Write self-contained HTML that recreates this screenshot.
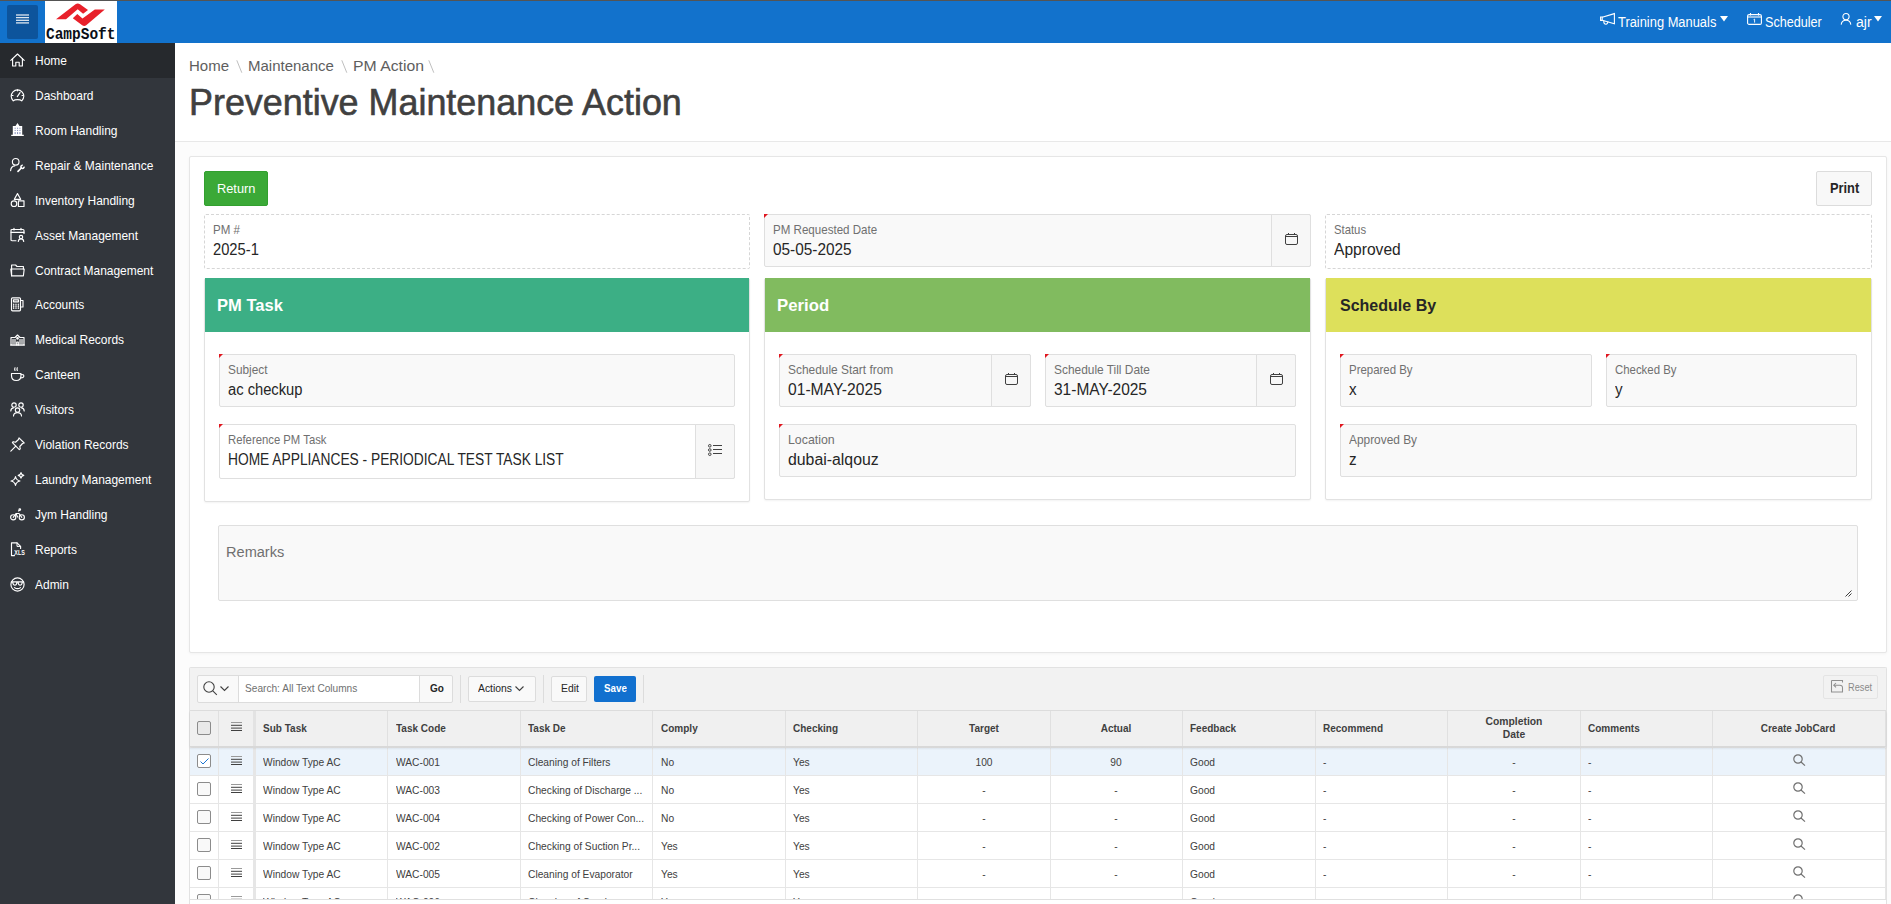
<!DOCTYPE html><html><head><meta charset="utf-8"><title>Preventive Maintenance Action</title><style>
*{box-sizing:border-box;}
html,body{margin:0;padding:0;}
body{width:1891px;height:904px;overflow:hidden;position:relative;background:#fcfcfc;font-family:"Liberation Sans",sans-serif;color:#262626;}
div,span{position:absolute;}
.t{white-space:nowrap;display:block;transform-origin:0 0;}
.tc{white-space:nowrap;display:block;transform-origin:50% 0;}
svg{position:absolute;overflow:visible;}
#topline{left:0;top:0;width:1891px;height:1px;background:#545454;}
#hdr{left:0;top:1px;width:1891px;height:42px;background:#1272cc;}
#burger{left:7px;top:5px;width:31px;height:34px;background:#0d549c;border-radius:2px;}
#logo{left:45px;top:1px;width:72px;height:42px;background:#fff;}
.ht{color:#fff;font-size:14px;line-height:16px;margin-top:0.3px;}
#side{left:0;top:43px;width:175px;height:861px;background:#32363c;}
.nav{left:0;width:175px;height:35px;}
.nav .t{left:35px;top:10px;color:#fff;font-size:13px;line-height:16px;}
.nav svg{left:10px;top:10px;}
#crumb{left:175px;top:43px;width:1716px;height:99px;background:#fff;border-bottom:1px solid #e8e8e8;}
.bc{font-size:15px;line-height:18px;color:#5e5e5e;top:13.7px;}
.bs{font-size:15px;line-height:18px;color:#b0b0b0;top:15.5px;}
#title{left:14px;top:38.5px;font-size:36px;line-height:42px;color:#404040;-webkit-text-stroke:0.6px #404040;}
#region{left:189px;top:156px;width:1698px;height:497px;background:#fff;border:1px solid #e6e6e6;box-shadow:0 1px 3px rgba(0,0,0,.04);border-radius:2px;}
.btn{border-radius:2px;font-size:13px;line-height:16px;}
.fld{border:1px solid #dfdfdf;background:#f9f9f9;border-radius:2px;}
.fld.ro{border:1px dashed #d6d6d6;background:#fff;}
.fld.wh{background:#fff;}
.lbl{left:8px;top:7px;font-size:13px;line-height:16px;color:#707070;}
.val{left:8px;top:25px;font-size:16px;line-height:19px;color:#262626;}
.req{left:-1px;top:-1px;width:0;height:0;border-top:4px solid #e0161f;border-right:4px solid transparent;}
.fbtn{top:-1px;bottom:-1px;right:-1px;border:1px solid #dfdfdf;background:#f7f7f7;border-radius:0 2px 2px 0;}
.panel{background:#fff;border:1px solid #e2e2e2;border-radius:2px;box-shadow:0 1px 2px rgba(0,0,0,.05);}
.phd{left:0;top:-1px;right:0;height:54px;}
.ptt{left:13.5px;top:18px;font-size:17px;line-height:20px;font-weight:bold;}
#ig{left:189px;top:667px;width:1697px;height:237px;background:#fff;border:1px solid #e2e2e2;}
#igtb{left:0;top:0;width:1695px;height:43px;background:#f0f0f0;border-bottom:1px solid #e2e2e2;}
.tb{background:#f9f9f9;border:1px solid #dcdcdc;border-radius:2px;}
.gh{top:43px;height:36px;background:#f0f0f0;}
.gc{font-size:11px;line-height:14px;}
</style></head><body>
<div id="topline"></div><div id="hdr"></div>
<div id="burger"><svg style="left:9px;top:9px" width="13" height="10" viewBox="0 0 13 10"><g stroke="#dfe7f0" stroke-width="1.3"><line x1="0" y1="1" x2="13" y2="1"/><line x1="0" y1="3.6" x2="13" y2="3.6"/><line x1="0" y1="6.3" x2="13" y2="6.3"/><line x1="0" y1="8.9" x2="13" y2="8.9"/></g></svg></div>
<div id="logo"><svg style="left:0;top:0" width="72" height="42" viewBox="0 0 72 42"><path d="M11 18.2 L30.5 3.3 Q32.7 1.5 35 3.3 L43 8.9 L38.1 12.7 L32.7 8.2 L21 18.2 Z" fill="#e8202a"/><path d="M27.8 17.2 L32.3 13 L37.5 17.5 L49.8 8.6 L59.8 8.6 L41.2 24.2 Q39.2 25.8 37.2 24.2 Z" fill="#e8202a"/><text x="1" y="38.2" textLength="69.5" lengthAdjust="spacingAndGlyphs" font-family="Liberation Mono" font-weight="bold" font-size="16.5" fill="#0a0f18">CampSoft</text></svg></div>
<svg style="left:1600px;top:13px" width="15" height="12" viewBox="0 0 15 12"><g fill="none" stroke="#fff" stroke-width="1.1"><path d="M0.6 4 V7.4 H2.2 V4 Z"/><path d="M2.2 4.2 L14.4 0.6 V10.8 L2.2 7.3"/><path d="M3.8 7.7 Q3.6 11.3 6 11.3 Q7.8 11.2 7.9 8.6"/></g></svg>
<span class="ht t" style="left:1618px;top:14px;transform:scaleX(.92)">Training Manuals</span>
<svg style="left:1720px;top:16px" width="8" height="6" viewBox="0 0 8 6"><path d="M0 0 L8 0 L4 5.5 Z" fill="#fff"/></svg>
<svg style="left:1747px;top:12.5px" width="15" height="12" viewBox="0 0 15 12"><g fill="none" stroke="#fff" stroke-width="1.1"><rect x="0.6" y="1.6" width="13.8" height="9.8" rx="1.5"/><line x1="0.6" y1="4" x2="14.4" y2="4"/><line x1="3.5" y1="0" x2="3.5" y2="2.5"/><line x1="11.5" y1="0" x2="11.5" y2="2.5"/><path d="M6.6 6.6 L7.6 6.1 V9.6" stroke-width="0.9"/></g></svg>
<span class="ht t" style="left:1765px;top:14px;transform:scaleX(.90)">Scheduler</span>
<svg style="left:1840px;top:13px" width="12" height="12" viewBox="0 0 12 12"><g fill="none" stroke="#fff" stroke-width="1.1"><circle cx="6" cy="3.6" r="3.1"/><path d="M1.2 11.6 Q1.6 7.2 6 7.2 Q10.4 7.2 10.8 11.6"/></g></svg>
<span class="ht t" style="left:1856px;top:14px">ajr</span>
<svg style="left:1874px;top:16px" width="8" height="6" viewBox="0 0 8 6"><path d="M0 0 L8 0 L4 5.5 Z" fill="#fff"/></svg>
<div id="side"></div>
<div style="left:0;top:43px;width:175px;height:35px;background:#26292d"></div>
<div class="nav" style="top:43.00px"><svg width="15" height="15" viewBox="0 0 15 15"><g fill="none" stroke="#fff" stroke-width="1.15" stroke-linejoin="round" stroke-linecap="round"><path d="M0.8 7.3 L7.5 1 L14.2 7.3"/><path d="M2.6 5.6 V13 H5.8 V9.2 H9.2 V13 H12.4 V5.6"/></g></svg><span class="t" style="transform:scaleX(.92)">Home</span></div>
<div class="nav" style="top:77.92px"><svg width="15" height="15" viewBox="0 0 15 15"><g fill="none" stroke="#fff" stroke-width="1.15" stroke-linejoin="round" stroke-linecap="round"><path d="M3.2 12.8 A6.3 6.3 0 1 1 11.8 12.8 Q10.5 11.6 7.5 11.6 Q4.5 11.6 3.2 12.8 Z"/><path d="M7.3 8.6 L10 4.6"/><line x1="7.5" y1="1.8" x2="7.5" y2="2.8"/><line x1="2" y1="7.5" x2="3" y2="7.5"/><line x1="12" y1="7.5" x2="13" y2="7.5"/></g></svg><span class="t" style="transform:scaleX(.92)">Dashboard</span></div>
<div class="nav" style="top:112.84px"><svg width="15" height="15" viewBox="0 0 15 15"><g transform="translate(0,-1.3)"><path d="M2.8 4.2 L5.5 4.2 L7.5 1.2 L9.5 4.2 L12.2 4.2 L12.2 13 L13.8 13 L13.8 14.2 L1.2 14.2 L1.2 13 L2.8 13 Z" fill="#fff"/><g fill="#8c96c0"><rect x="4.6" y="6" width="1.1" height="1.1"/><rect x="7" y="6" width="1.1" height="1.1"/><rect x="9.4" y="6" width="1.1" height="1.1"/><rect x="4.6" y="8.2" width="1.1" height="1.1"/><rect x="7" y="8.2" width="1.1" height="1.1"/><rect x="9.4" y="8.2" width="1.1" height="1.1"/><rect x="4.6" y="10.4" width="1.1" height="2"/><rect x="7" y="10.4" width="1.1" height="2"/><rect x="9.4" y="10.4" width="1.1" height="2"/></g></g></svg><span class="t" style="transform:scaleX(.92)">Room Handling</span></div>
<div class="nav" style="top:147.76px"><svg width="15" height="15" viewBox="0 0 15 15"><g fill="none" stroke="#fff" stroke-width="1.15" stroke-linejoin="round" stroke-linecap="round"><circle cx="5.7" cy="3.8" r="3.3"/><path d="M0.6 12.6 Q1 8.2 4.8 7.9"/><path d="M8 13.3 L11.3 10" stroke-width="1.7"/><path d="M14.08 8.52 A1.6 1.6 0 1 1 12.78 7.22" stroke-width="1.5" stroke-linecap="butt"/></g></svg><span class="t" style="transform:scaleX(.92)">Repair &amp; Maintenance</span></div>
<div class="nav" style="top:182.68px"><svg width="15" height="15" viewBox="0 0 15 15"><g fill="none" stroke="#fff" stroke-width="1.15" stroke-linejoin="round" stroke-linecap="round"><path d="M7.5 0.6 L10.7 6.3 H4.3 Z"/><circle cx="4" cy="10.7" r="2.8"/><rect x="8.4" y="7.8" width="5.6" height="5.7"/></g></svg><span class="t" style="transform:scaleX(.92)">Inventory Handling</span></div>
<div class="nav" style="top:217.60px"><svg width="15" height="15" viewBox="0 0 15 15"><g fill="none" stroke="#fff" stroke-width="1.15" stroke-linejoin="round" stroke-linecap="round"><path d="M6 12.7 H2 Q1 12.7 1 11.7 V2.5 Q1 1.5 2 1.5 H13 Q14 1.5 14 2.5 V5.5"/><line x1="1" y1="4.3" x2="14" y2="4.3"/><line x1="4" y1="0.4" x2="4" y2="2"/><line x1="11" y1="0.4" x2="11" y2="2"/><circle cx="11" cy="9" r="1.7"/><path d="M8.3 13.5 Q8.5 10.9 11 10.9 Q13.5 10.9 13.7 13.5"/></g></svg><span class="t" style="transform:scaleX(.92)">Asset Management</span></div>
<div class="nav" style="top:252.52px"><svg width="15" height="15" viewBox="0 0 15 15"><g fill="none" stroke="#fff" stroke-width="1.15" stroke-linejoin="round" stroke-linecap="round"><path d="M1.6 12.8 V2 H5.6 L7 3.5 H13.4 V6"/><path d="M0.8 6 H14.2 L13.4 12.8 H1.6 Z"/></g></svg><span class="t" style="transform:scaleX(.92)">Contract Management</span></div>
<div class="nav" style="top:287.44px"><svg width="15" height="15" viewBox="0 0 15 15"><g fill="none" stroke="#fff" stroke-width="1.15" stroke-linejoin="round" stroke-linecap="round"><rect x="1.5" y="0.8" width="9" height="13" rx="1"/><rect x="3.5" y="2.8" width="5" height="2"/><path d="M10.5 3.5 H13 V10 H10.5"/><line x1="3.7" y1="7" x2="3.7" y2="11.5" stroke-dasharray="1 1"/><line x1="6" y1="7" x2="6" y2="11.5" stroke-dasharray="1 1"/><line x1="8.3" y1="7" x2="8.3" y2="11.5" stroke-dasharray="1 1"/></g></svg><span class="t" style="transform:scaleX(.92)">Accounts</span></div>
<div class="nav" style="top:322.36px"><svg width="15" height="15" viewBox="0 0 15 15"><g fill="none" stroke="#fff" stroke-width="1.15" stroke-linejoin="round" stroke-linecap="round"><path d="M1 13 V5.5 H5 L7.5 3 L10 5.5 H14 V13 Z"/><line x1="0.5" y1="13" x2="14.5" y2="13"/><line x1="3" y1="7.5" x2="3" y2="11.5"/><line x1="5" y1="7.5" x2="5" y2="11.5"/><line x1="10" y1="7.5" x2="10" y2="11.5"/><line x1="12" y1="7.5" x2="12" y2="11.5"/><path d="M6.7 13 V10 H8.3 V13"/><circle cx="7.5" cy="6.3" r="0.8" fill="#fff"/></g></svg><span class="t" style="transform:scaleX(.92)">Medical Records</span></div>
<div class="nav" style="top:357.28px"><svg width="15" height="15" viewBox="0 0 15 15"><g fill="none" stroke="#fff" stroke-width="1.15" stroke-linejoin="round" stroke-linecap="round"><path d="M1.5 6.5 H11 V8.5 Q11 13.5 6.3 13.5 Q1.5 13.5 1.5 8.5 Z"/><path d="M11 7.5 Q14 7.3 13.8 9.3 Q13.5 11 10.5 10.8"/><path d="M5 0.8 Q4.3 2.2 5 3.5 M7.3 0.8 Q6.6 2.2 7.3 3.5"/></g></svg><span class="t" style="transform:scaleX(.92)">Canteen</span></div>
<div class="nav" style="top:392.20px"><svg width="15" height="15" viewBox="0 0 15 15"><g fill="none" stroke="#fff" stroke-width="1.15" stroke-linejoin="round" stroke-linecap="round"><circle cx="4" cy="3" r="2.2"/><circle cx="11" cy="3" r="2.2"/><circle cx="7.5" cy="8" r="2.2"/><path d="M0.8 9 Q1 5.8 3.5 5.8"/><path d="M14.2 9 Q14 5.8 11.5 5.8"/><path d="M3.5 14 Q3.7 10.6 7.5 10.6 Q11.3 10.6 11.5 14"/></g></svg><span class="t" style="transform:scaleX(.92)">Visitors</span></div>
<div class="nav" style="top:427.12px"><svg width="15" height="15" viewBox="0 0 15 15"><g fill="none" stroke="#fff" stroke-width="1.15" stroke-linejoin="round" stroke-linecap="round"><path d="M9 0.8 L14.2 6 L12.5 6.5 L9.8 9.5 L10.3 11.8 L9.3 12.6 L2.4 5.7 L3.2 4.7 L5.5 5.2 L8.5 2.5 Z"/><line x1="5.8" y1="9.2" x2="0.8" y2="14.2"/></g></svg><span class="t" style="transform:scaleX(.92)">Violation Records</span></div>
<div class="nav" style="top:462.04px"><svg width="15" height="15" viewBox="0 0 15 15"><g fill="none" stroke="#fff" stroke-width="1.15" stroke-linejoin="round" stroke-linecap="round"><path d="M5.5 4.5 Q6.2 8.3 10 9 Q6.2 9.7 5.5 13.5 Q4.8 9.7 1 9 Q4.8 8.3 5.5 4.5 Z"/><path d="M11 0.6 Q11.4 3 13.8 3.4 Q11.4 3.8 11 6.2 Q10.6 3.8 8.2 3.4 Q10.6 3 11 0.6 Z"/></g></svg><span class="t" style="transform:scaleX(.92)">Laundry Management</span></div>
<div class="nav" style="top:496.96px"><svg width="15" height="15" viewBox="0 0 15 15"><g fill="none" stroke="#fff" stroke-width="1.15" stroke-linejoin="round" stroke-linecap="round"><circle cx="3.2" cy="10.3" r="2.6"/><circle cx="11.8" cy="10.3" r="2.6"/><path d="M3.2 10.3 L6 6.5 L9 6.5 L11.8 10.3 M6 6.5 L7.5 10 M8.5 4 L9.5 3.2"/><circle cx="9.8" cy="2.5" r="0.8"/></g></svg><span class="t" style="transform:scaleX(.92)">Jym Handling</span></div>
<div class="nav" style="top:531.88px"><svg width="15" height="15" viewBox="0 0 15 15"><g fill="none" stroke="#fff" stroke-width="1.15" stroke-linejoin="round" stroke-linecap="round"><path d="M4.5 13.6 H1.5 V0.8 H7 L10.6 4.4 V6.5"/><path d="M7 0.8 V4.4 H10.6" stroke-width="1"/></g><text x="4.3" y="12.6" font-family="Liberation Sans" font-weight="bold" font-size="6.6" fill="#fff" textLength="10.5" lengthAdjust="spacingAndGlyphs">XLS</text></svg><span class="t" style="transform:scaleX(.92)">Reports</span></div>
<div class="nav" style="top:566.80px"><svg width="15" height="15" viewBox="0 0 15 15"><g fill="none" stroke="#fff" stroke-width="1.15" stroke-linejoin="round" stroke-linecap="round"><circle cx="7.5" cy="7.5" r="6.6"/><path d="M4.5 10.6 Q7.5 12.8 10.5 10.6"/><path d="M1.4 4.8 H13.6 M2.6 4.8 Q3 8.2 4.9 8.2 Q6.8 8.2 7 4.8 M8 4.8 Q8.2 8.2 10.1 8.2 Q12 8.2 12.4 4.8"/></g></svg><span class="t" style="transform:scaleX(.92)">Admin</span></div>
<div id="crumb">
<span class="bc t" style="left:14px">Home</span>
<span class="bc t" style="left:73px">Maintenance</span>
<span class="bc t" style="left:178px;transform:scaleX(1.05)">PM Action</span>
<svg style="left:60.5px;top:17px" width="7" height="13" viewBox="0 0 7 13"><line x1="0.8" y1="0.3" x2="5.8" y2="12.7" stroke="#b8b8b8" stroke-width="0.9"/></svg>
<svg style="left:165.5px;top:17px" width="7" height="13" viewBox="0 0 7 13"><line x1="0.8" y1="0.3" x2="5.8" y2="12.7" stroke="#b8b8b8" stroke-width="0.9"/></svg>
<svg style="left:253px;top:17px" width="7" height="13" viewBox="0 0 7 13"><line x1="0.8" y1="0.3" x2="5.8" y2="12.7" stroke="#b8b8b8" stroke-width="0.9"/></svg>
<span id="title" class="t" style="transform:scaleX(.997)">Preventive Maintenance Action</span>
</div>
<div id="region"></div>
<div class="btn" style="left:204px;top:171px;width:64px;height:35px;background:#3ba937;border:1px solid #32a02f"><span class="t" style="left:12px;top:8.7px;color:#fff;transform:scaleX(.985)">Return</span></div>
<div class="btn" style="left:1816px;top:171px;width:56px;height:35px;background:#f8f8f8;border:1px solid #dcdcdc"><span class="t" style="left:13px;top:9px;color:#262626;font-weight:bold;font-size:13.8px;transform:scaleX(.93)">Print</span></div>
<div class="fld ro" style="left:204px;top:214px;width:546px;height:55px"><span class="lbl t" style="transform:scaleX(0.89)">PM #</span><span class="val t" style="font-size:16px;transform:scaleX(0.92)">2025-1</span></div>
<div class="fld " style="left:764px;top:214px;width:547px;height:53px"><div class="req"></div><span class="lbl t" style="transform:scaleX(0.89)">PM Requested Date</span><span class="val t" style="font-size:16px;transform:scaleX(0.96)">05-05-2025</span><div class="fbtn" style="width:40px"><svg style="left:13px;top:18px" width="13" height="12" viewBox="0 0 13 12"><g fill="none" stroke="#404040" stroke-width="1"><rect x="0.5" y="1.5" width="12" height="10" rx="1.5"/><line x1="0.5" y1="3.5" x2="12.5" y2="3.5"/><line x1="3.5" y1="0" x2="3.5" y2="2"/><line x1="9.5" y1="0" x2="9.5" y2="2"/></g></svg></div></div>
<div class="fld ro" style="left:1325px;top:214px;width:547px;height:55px"><span class="lbl t" style="transform:scaleX(0.87)">Status</span><span class="val t" style="font-size:16px;transform:scaleX(0.974)">Approved</span></div>
<div class="panel" style="left:204px;top:278px;width:546px;height:224px"><div class="phd" style="background:#3caf85"><span class="ptt t" style="left:11.5px;color:#fff;transform:scaleX(0.974)">PM Task</span></div></div>
<div class="panel" style="left:764px;top:278px;width:547px;height:222px"><div class="phd" style="background:#81bb5f"><span class="ptt t" style="left:12.2px;color:#fff;transform:scaleX(0.985)">Period</span></div></div>
<div class="panel" style="left:1325px;top:278px;width:547px;height:222px"><div class="phd" style="background:#dde05b"><span class="ptt t" style="left:13.5px;color:#262626;transform:scaleX(0.942)">Schedule By</span></div></div>
<div class="fld " style="left:219px;top:354px;width:516px;height:53px"><div class="req"></div><span class="lbl t" style="transform:scaleX(0.91)">Subject</span><span class="val t" style="font-size:16px;transform:scaleX(0.92)">ac checkup</span></div>
<div class="fld wh" style="left:219px;top:424px;width:516px;height:55px"><div class="req"></div><span class="lbl t" style="transform:scaleX(0.87)">Reference PM Task</span><span class="val t" style="font-size:16px;transform:scaleX(0.86)">HOME APPLIANCES - PERIODICAL TEST TASK LIST</span><div class="fbtn" style="width:40px"><svg style="left:12px;top:19px" width="15" height="12" viewBox="0 0 15 12"><g fill="none" stroke="#404040" stroke-width="1"><circle cx="1.8" cy="1.8" r="1.3"/><circle cx="1.8" cy="6" r="1.3"/><circle cx="1.8" cy="10.2" r="1.3"/><line x1="5" y1="1.5" x2="14" y2="1.5"/><line x1="5" y1="5.5" x2="14" y2="5.5"/><line x1="5" y1="9.5" x2="14" y2="9.5"/></g></svg></div></div>
<div class="fld " style="left:779px;top:354px;width:252px;height:53px"><div class="req"></div><span class="lbl t" style="transform:scaleX(0.916)">Schedule Start from</span><span class="val t" style="font-size:16px;transform:scaleX(0.977)">01-MAY-2025</span><div class="fbtn" style="width:40px"><svg style="left:13px;top:18px" width="13" height="12" viewBox="0 0 13 12"><g fill="none" stroke="#404040" stroke-width="1"><rect x="0.5" y="1.5" width="12" height="10" rx="1.5"/><line x1="0.5" y1="3.5" x2="12.5" y2="3.5"/><line x1="3.5" y1="0" x2="3.5" y2="2"/><line x1="9.5" y1="0" x2="9.5" y2="2"/></g></svg></div></div>
<div class="fld " style="left:1045px;top:354px;width:251px;height:53px"><div class="req"></div><span class="lbl t" style="transform:scaleX(0.916)">Schedule Till Date</span><span class="val t" style="font-size:16px;transform:scaleX(0.968)">31-MAY-2025</span><div class="fbtn" style="width:40px"><svg style="left:13px;top:18px" width="13" height="12" viewBox="0 0 13 12"><g fill="none" stroke="#404040" stroke-width="1"><rect x="0.5" y="1.5" width="12" height="10" rx="1.5"/><line x1="0.5" y1="3.5" x2="12.5" y2="3.5"/><line x1="3.5" y1="0" x2="3.5" y2="2"/><line x1="9.5" y1="0" x2="9.5" y2="2"/></g></svg></div></div>
<div class="fld " style="left:779px;top:424px;width:517px;height:53px"><div class="req"></div><span class="lbl t" style="transform:scaleX(0.95)">Location</span><span class="val t" style="font-size:16px;transform:scaleX(0.99)">dubai-alqouz</span></div>
<div class="fld " style="left:1340px;top:354px;width:252px;height:53px"><div class="req"></div><span class="lbl t" style="transform:scaleX(0.88)">Prepared By</span><span class="val t" style="font-size:16px;transform:scaleX(0.95)">x</span></div>
<div class="fld " style="left:1606px;top:354px;width:251px;height:53px"><div class="req"></div><span class="lbl t" style="transform:scaleX(0.877)">Checked By</span><span class="val t" style="font-size:16px;transform:scaleX(0.95)">y</span></div>
<div class="fld " style="left:1340px;top:424px;width:517px;height:53px"><div class="req"></div><span class="lbl t" style="transform:scaleX(0.914)">Approved By</span><span class="val t" style="font-size:16px;transform:scaleX(0.95)">z</span></div>
<div class="fld" style="left:218px;top:525px;width:1640px;height:76px"><span class="t" style="left:6.8px;top:17.5px;font-size:15.5px;line-height:16px;color:#707070;transform:scaleX(.94)">Remarks</span><svg style="right:5px;bottom:3px" width="7" height="7" viewBox="0 0 7 7"><g stroke="#404040" stroke-width="1"><line x1="0.5" y1="6.5" x2="6.5" y2="0.5"/><line x1="3.5" y1="6.5" x2="6.5" y2="3.5"/></g></svg></div>
<div style="left:189px;top:667px;width:1698px;height:237px;background:#fff;border:1px solid #e2e2e2;border-bottom:none;border-radius:2px 2px 0 0"></div>
<div style="left:190px;top:668px;width:1696px;height:43px;background:#f2f2f2;border-bottom:1px solid #dedede"></div>
<div class="tb" style="left:197px;top:675px;width:256px;height:28px;background:#f9f9f9"></div>
<div style="left:238px;top:676px;width:182px;height:26px;background:#fff;border-left:1px solid #dcdcdc;border-right:1px solid #dcdcdc"></div>
<svg style="left:203px;top:680.5px" width="26" height="14" viewBox="0 0 26 14"><g fill="none" stroke="#404040" stroke-width="1.1"><circle cx="6" cy="6" r="5.2"/><line x1="9.8" y1="9.8" x2="13.8" y2="13.8"/><path d="M17.5 5.5 L21.5 9.5 L25.5 5.5"/></g></svg>
<span class="t" style="left:245px;top:682px;font-size:11px;line-height:13px;color:#707070;transform:scaleX(.92)">Search: All Text Columns</span>
<span class="t" style="left:430px;top:682px;font-size:11.5px;line-height:13px;color:#262626;font-weight:bold;transform:scaleX(.87)">Go</span>
<div style="left:460px;top:675px;width:1px;height:28px;background:#dcdcdc"></div>
<div class="tb" style="left:468px;top:676px;width:68px;height:26px"></div>
<span class="t" style="left:477.5px;top:682px;font-size:11.5px;line-height:13px;color:#262626;transform:scaleX(.9)">Actions</span>
<svg style="left:515px;top:686px" width="9" height="5" viewBox="0 0 9 5"><path d="M0.5 0.5 L4.5 4.5 L8.5 0.5" fill="none" stroke="#404040" stroke-width="1.1"/></svg>
<div style="left:543px;top:675px;width:1px;height:28px;background:#dcdcdc"></div>
<div class="tb" style="left:551px;top:676px;width:36px;height:26px"></div>
<span class="t" style="left:560.5px;top:682px;font-size:11.5px;line-height:13px;color:#262626;transform:scaleX(.9)">Edit</span>
<div style="left:594px;top:676px;width:42px;height:26px;background:#1170cf;border-radius:2px"></div>
<span class="t" style="left:603.5px;top:682px;font-size:11.5px;line-height:13px;color:#fff;font-weight:bold;transform:scaleX(.85)">Save</span>
<div style="left:643px;top:675px;width:1px;height:28px;background:#dcdcdc"></div>
<div style="left:1823px;top:675px;width:55px;height:24px;border:1px solid #e4e4e4;border-radius:2px;background:#f2f2f2"></div>
<svg style="left:1830.5px;top:680px" width="13" height="13" viewBox="0 0 13 13"><g fill="none" stroke="#8f8f8f" stroke-width="1.05"><path d="M0.5 0.5 H11.5 V2.5"/><path d="M0.5 0.5 V12 H11.5 V7.8 Q11.5 5.2 8.8 5.2 H2.8"/><path d="M5 3 L2.8 5.2 L5 7.4"/></g></svg>
<span class="t" style="left:1847.5px;top:681px;font-size:11px;line-height:13px;color:#8a8a8a;transform:scaleX(.84)">Reset</span>
<div style="left:190px;top:711px;width:1696px;height:36px;background:#f0f0f0;border-bottom:1px solid #d8d8d8;box-shadow:0 1px 2px rgba(0,0,0,.12)"></div>
<div style="left:190px;top:748px;width:1696px;height:151.5px;overflow:hidden;border-bottom:1px solid #e0e0e0"><div style="left:0;top:0px;width:1696px;height:28px;background:#ebf3fb;border-bottom:1px solid #e6e6e6"></div><div style="left:7px;top:6.2px;width:14px;height:14px;border:1px solid #8c8c8c;border-radius:2px;background:#fff"></div><svg style="left:9.5px;top:10px" width="9" height="7" viewBox="0 0 9 7"><path d="M0.5 3.5 L3 6 L8.5 0.5" fill="none" stroke="#1a75d2" stroke-width="1"/></svg><svg style="left:41px;top:7.8px" width="11" height="9" viewBox="0 0 11 9"><g stroke="#404040" stroke-width="1"><line x1="0" y1="0.5" x2="11" y2="0.5" stroke="#9a9a9a"/><line x1="0" y1="3.3" x2="11" y2="3.3"/><line x1="0" y1="6.1" x2="11" y2="6.1"/><line x1="0" y1="8.5" x2="11" y2="8.5"/></g></svg><span class="t gc" style="left:73px;top:6.7px;color:#404040;transform:scaleX(0.93)">Window Type AC</span><span class="t gc" style="left:205.5px;top:6.7px;color:#404040;transform:scaleX(0.93)">WAC-001</span><span class="t gc" style="left:337.5px;top:6.7px;color:#404040;transform:scaleX(0.93)">Cleaning of Filters</span><span class="t gc" style="left:470.5px;top:6.7px;color:#404040;transform:scaleX(0.93)">No</span><span class="t gc" style="left:603px;top:6.7px;color:#404040;transform:scaleX(0.93)">Yes</span><span class="tc gc" style="left:733.5px;width:120px;text-align:center;top:6.7px;color:#404040;transform:scaleX(0.93)">100</span><span class="tc gc" style="left:866px;width:120px;text-align:center;top:6.7px;color:#404040;transform:scaleX(0.93)">90</span><span class="t gc" style="left:1000px;top:6.7px;color:#404040;transform:scaleX(0.93)">Good</span><span class="t gc" style="left:1133px;top:6.7px;color:#404040;transform:scaleX(0.93)">-</span><span class="tc gc" style="left:1263.5px;width:120px;text-align:center;top:6.7px;color:#404040;transform:scaleX(0.93)">-</span><span class="t gc" style="left:1398px;top:6.7px;color:#404040;transform:scaleX(0.93)">-</span><svg style="left:1602.5px;top:5.8px" width="13" height="12" viewBox="0 0 13 12"><g fill="none" stroke="#707070" stroke-width="1.2"><circle cx="5" cy="5" r="4.2"/><line x1="8" y1="8" x2="12" y2="11.6"/></g></svg><div style="left:0;top:28px;width:1696px;height:28px;background:#fff;border-bottom:1px solid #e6e6e6"></div><div style="left:7px;top:34.2px;width:14px;height:14px;border:1px solid #8c8c8c;border-radius:2px;background:#f9f9f9"></div><svg style="left:41px;top:35.8px" width="11" height="9" viewBox="0 0 11 9"><g stroke="#404040" stroke-width="1"><line x1="0" y1="0.5" x2="11" y2="0.5" stroke="#9a9a9a"/><line x1="0" y1="3.3" x2="11" y2="3.3"/><line x1="0" y1="6.1" x2="11" y2="6.1"/><line x1="0" y1="8.5" x2="11" y2="8.5"/></g></svg><span class="t gc" style="left:73px;top:34.7px;color:#404040;transform:scaleX(0.93)">Window Type AC</span><span class="t gc" style="left:205.5px;top:34.7px;color:#404040;transform:scaleX(0.93)">WAC-003</span><span class="t gc" style="left:337.5px;top:34.7px;color:#404040;transform:scaleX(0.93)">Checking of Discharge ...</span><span class="t gc" style="left:470.5px;top:34.7px;color:#404040;transform:scaleX(0.93)">No</span><span class="t gc" style="left:603px;top:34.7px;color:#404040;transform:scaleX(0.93)">Yes</span><span class="tc gc" style="left:733.5px;width:120px;text-align:center;top:34.7px;color:#404040;transform:scaleX(0.93)">-</span><span class="tc gc" style="left:866px;width:120px;text-align:center;top:34.7px;color:#404040;transform:scaleX(0.93)">-</span><span class="t gc" style="left:1000px;top:34.7px;color:#404040;transform:scaleX(0.93)">Good</span><span class="t gc" style="left:1133px;top:34.7px;color:#404040;transform:scaleX(0.93)">-</span><span class="tc gc" style="left:1263.5px;width:120px;text-align:center;top:34.7px;color:#404040;transform:scaleX(0.93)">-</span><span class="t gc" style="left:1398px;top:34.7px;color:#404040;transform:scaleX(0.93)">-</span><svg style="left:1602.5px;top:33.8px" width="13" height="12" viewBox="0 0 13 12"><g fill="none" stroke="#707070" stroke-width="1.2"><circle cx="5" cy="5" r="4.2"/><line x1="8" y1="8" x2="12" y2="11.6"/></g></svg><div style="left:0;top:56px;width:1696px;height:28px;background:#fff;border-bottom:1px solid #e6e6e6"></div><div style="left:7px;top:62.2px;width:14px;height:14px;border:1px solid #8c8c8c;border-radius:2px;background:#f9f9f9"></div><svg style="left:41px;top:63.8px" width="11" height="9" viewBox="0 0 11 9"><g stroke="#404040" stroke-width="1"><line x1="0" y1="0.5" x2="11" y2="0.5" stroke="#9a9a9a"/><line x1="0" y1="3.3" x2="11" y2="3.3"/><line x1="0" y1="6.1" x2="11" y2="6.1"/><line x1="0" y1="8.5" x2="11" y2="8.5"/></g></svg><span class="t gc" style="left:73px;top:62.7px;color:#404040;transform:scaleX(0.93)">Window Type AC</span><span class="t gc" style="left:205.5px;top:62.7px;color:#404040;transform:scaleX(0.93)">WAC-004</span><span class="t gc" style="left:337.5px;top:62.7px;color:#404040;transform:scaleX(0.93)">Checking of Power Con...</span><span class="t gc" style="left:470.5px;top:62.7px;color:#404040;transform:scaleX(0.93)">No</span><span class="t gc" style="left:603px;top:62.7px;color:#404040;transform:scaleX(0.93)">Yes</span><span class="tc gc" style="left:733.5px;width:120px;text-align:center;top:62.7px;color:#404040;transform:scaleX(0.93)">-</span><span class="tc gc" style="left:866px;width:120px;text-align:center;top:62.7px;color:#404040;transform:scaleX(0.93)">-</span><span class="t gc" style="left:1000px;top:62.7px;color:#404040;transform:scaleX(0.93)">Good</span><span class="t gc" style="left:1133px;top:62.7px;color:#404040;transform:scaleX(0.93)">-</span><span class="tc gc" style="left:1263.5px;width:120px;text-align:center;top:62.7px;color:#404040;transform:scaleX(0.93)">-</span><span class="t gc" style="left:1398px;top:62.7px;color:#404040;transform:scaleX(0.93)">-</span><svg style="left:1602.5px;top:61.8px" width="13" height="12" viewBox="0 0 13 12"><g fill="none" stroke="#707070" stroke-width="1.2"><circle cx="5" cy="5" r="4.2"/><line x1="8" y1="8" x2="12" y2="11.6"/></g></svg><div style="left:0;top:84px;width:1696px;height:28px;background:#fff;border-bottom:1px solid #e6e6e6"></div><div style="left:7px;top:90.2px;width:14px;height:14px;border:1px solid #8c8c8c;border-radius:2px;background:#f9f9f9"></div><svg style="left:41px;top:91.8px" width="11" height="9" viewBox="0 0 11 9"><g stroke="#404040" stroke-width="1"><line x1="0" y1="0.5" x2="11" y2="0.5" stroke="#9a9a9a"/><line x1="0" y1="3.3" x2="11" y2="3.3"/><line x1="0" y1="6.1" x2="11" y2="6.1"/><line x1="0" y1="8.5" x2="11" y2="8.5"/></g></svg><span class="t gc" style="left:73px;top:90.7px;color:#404040;transform:scaleX(0.93)">Window Type AC</span><span class="t gc" style="left:205.5px;top:90.7px;color:#404040;transform:scaleX(0.93)">WAC-002</span><span class="t gc" style="left:337.5px;top:90.7px;color:#404040;transform:scaleX(0.93)">Checking of Suction Pr...</span><span class="t gc" style="left:470.5px;top:90.7px;color:#404040;transform:scaleX(0.93)">Yes</span><span class="t gc" style="left:603px;top:90.7px;color:#404040;transform:scaleX(0.93)">Yes</span><span class="tc gc" style="left:733.5px;width:120px;text-align:center;top:90.7px;color:#404040;transform:scaleX(0.93)">-</span><span class="tc gc" style="left:866px;width:120px;text-align:center;top:90.7px;color:#404040;transform:scaleX(0.93)">-</span><span class="t gc" style="left:1000px;top:90.7px;color:#404040;transform:scaleX(0.93)">Good</span><span class="t gc" style="left:1133px;top:90.7px;color:#404040;transform:scaleX(0.93)">-</span><span class="tc gc" style="left:1263.5px;width:120px;text-align:center;top:90.7px;color:#404040;transform:scaleX(0.93)">-</span><span class="t gc" style="left:1398px;top:90.7px;color:#404040;transform:scaleX(0.93)">-</span><svg style="left:1602.5px;top:89.8px" width="13" height="12" viewBox="0 0 13 12"><g fill="none" stroke="#707070" stroke-width="1.2"><circle cx="5" cy="5" r="4.2"/><line x1="8" y1="8" x2="12" y2="11.6"/></g></svg><div style="left:0;top:112px;width:1696px;height:28px;background:#fff;border-bottom:1px solid #e6e6e6"></div><div style="left:7px;top:118.2px;width:14px;height:14px;border:1px solid #8c8c8c;border-radius:2px;background:#f9f9f9"></div><svg style="left:41px;top:119.8px" width="11" height="9" viewBox="0 0 11 9"><g stroke="#404040" stroke-width="1"><line x1="0" y1="0.5" x2="11" y2="0.5" stroke="#9a9a9a"/><line x1="0" y1="3.3" x2="11" y2="3.3"/><line x1="0" y1="6.1" x2="11" y2="6.1"/><line x1="0" y1="8.5" x2="11" y2="8.5"/></g></svg><span class="t gc" style="left:73px;top:118.7px;color:#404040;transform:scaleX(0.93)">Window Type AC</span><span class="t gc" style="left:205.5px;top:118.7px;color:#404040;transform:scaleX(0.93)">WAC-005</span><span class="t gc" style="left:337.5px;top:118.7px;color:#404040;transform:scaleX(0.93)">Cleaning of Evaporator</span><span class="t gc" style="left:470.5px;top:118.7px;color:#404040;transform:scaleX(0.93)">Yes</span><span class="t gc" style="left:603px;top:118.7px;color:#404040;transform:scaleX(0.93)">Yes</span><span class="tc gc" style="left:733.5px;width:120px;text-align:center;top:118.7px;color:#404040;transform:scaleX(0.93)">-</span><span class="tc gc" style="left:866px;width:120px;text-align:center;top:118.7px;color:#404040;transform:scaleX(0.93)">-</span><span class="t gc" style="left:1000px;top:118.7px;color:#404040;transform:scaleX(0.93)">Good</span><span class="t gc" style="left:1133px;top:118.7px;color:#404040;transform:scaleX(0.93)">-</span><span class="tc gc" style="left:1263.5px;width:120px;text-align:center;top:118.7px;color:#404040;transform:scaleX(0.93)">-</span><span class="t gc" style="left:1398px;top:118.7px;color:#404040;transform:scaleX(0.93)">-</span><svg style="left:1602.5px;top:117.8px" width="13" height="12" viewBox="0 0 13 12"><g fill="none" stroke="#707070" stroke-width="1.2"><circle cx="5" cy="5" r="4.2"/><line x1="8" y1="8" x2="12" y2="11.6"/></g></svg><div style="left:0;top:140px;width:1696px;height:28px;background:#fff;border-bottom:1px solid #e6e6e6"></div><div style="left:7px;top:146.2px;width:14px;height:14px;border:1px solid #8c8c8c;border-radius:2px;background:#f9f9f9"></div><svg style="left:41px;top:147.8px" width="11" height="9" viewBox="0 0 11 9"><g stroke="#404040" stroke-width="1"><line x1="0" y1="0.5" x2="11" y2="0.5" stroke="#9a9a9a"/><line x1="0" y1="3.3" x2="11" y2="3.3"/><line x1="0" y1="6.1" x2="11" y2="6.1"/><line x1="0" y1="8.5" x2="11" y2="8.5"/></g></svg><span class="t gc" style="left:73px;top:146.7px;color:#404040;transform:scaleX(0.93)">Window Type AC</span><span class="t gc" style="left:205.5px;top:146.7px;color:#404040;transform:scaleX(0.93)">WAC-006</span><span class="t gc" style="left:337.5px;top:146.7px;color:#404040;transform:scaleX(0.93)">Cleaning of Condenser</span><span class="t gc" style="left:470.5px;top:146.7px;color:#404040;transform:scaleX(0.93)">Yes</span><span class="t gc" style="left:603px;top:146.7px;color:#404040;transform:scaleX(0.93)">Yes</span><span class="tc gc" style="left:733.5px;width:120px;text-align:center;top:146.7px;color:#404040;transform:scaleX(0.93)">-</span><span class="tc gc" style="left:866px;width:120px;text-align:center;top:146.7px;color:#404040;transform:scaleX(0.93)">-</span><span class="t gc" style="left:1000px;top:146.7px;color:#404040;transform:scaleX(0.93)">Good</span><span class="t gc" style="left:1133px;top:146.7px;color:#404040;transform:scaleX(0.93)">-</span><span class="tc gc" style="left:1263.5px;width:120px;text-align:center;top:146.7px;color:#404040;transform:scaleX(0.93)">-</span><span class="t gc" style="left:1398px;top:146.7px;color:#404040;transform:scaleX(0.93)">-</span><svg style="left:1602.5px;top:145.8px" width="13" height="12" viewBox="0 0 13 12"><g fill="none" stroke="#707070" stroke-width="1.2"><circle cx="5" cy="5" r="4.2"/><line x1="8" y1="8" x2="12" y2="11.6"/></g></svg><div style="left:27.5px;top:0;width:1px;height:160px;background:#e6e6e6"></div><div style="left:63px;top:0;width:3px;height:160px;background:#e6e6e6"></div><div style="left:197px;top:0;width:1px;height:160px;background:#e6e6e6"></div><div style="left:330px;top:0;width:1px;height:160px;background:#e6e6e6"></div><div style="left:462px;top:0;width:1px;height:160px;background:#e6e6e6"></div><div style="left:595px;top:0;width:1px;height:160px;background:#e6e6e6"></div><div style="left:727px;top:0;width:1px;height:160px;background:#e6e6e6"></div><div style="left:860px;top:0;width:1px;height:160px;background:#e6e6e6"></div><div style="left:992px;top:0;width:1px;height:160px;background:#e6e6e6"></div><div style="left:1125px;top:0;width:1px;height:160px;background:#e6e6e6"></div><div style="left:1257px;top:0;width:1px;height:160px;background:#e6e6e6"></div><div style="left:1390px;top:0;width:1px;height:160px;background:#e6e6e6"></div><div style="left:1522px;top:0;width:1px;height:160px;background:#e6e6e6"></div><div style="left:1694.5px;top:0;width:1px;height:160px;background:#e6e6e6"></div></div>
<div style="left:190px;top:747px;width:1696px;height:3px;background:linear-gradient(rgba(0,0,0,.09),rgba(0,0,0,0))"></div>
<div style="left:217.5px;top:711px;width:1px;height:35px;background:#e0e0e0"></div>
<div style="left:253px;top:711px;width:3px;height:35px;background:#e3e3e3"></div>
<div style="left:387px;top:711px;width:1px;height:35px;background:#e0e0e0"></div>
<div style="left:520px;top:711px;width:1px;height:35px;background:#e0e0e0"></div>
<div style="left:652px;top:711px;width:1px;height:35px;background:#e0e0e0"></div>
<div style="left:785px;top:711px;width:1px;height:35px;background:#e0e0e0"></div>
<div style="left:917px;top:711px;width:1px;height:35px;background:#e0e0e0"></div>
<div style="left:1050px;top:711px;width:1px;height:35px;background:#e0e0e0"></div>
<div style="left:1182px;top:711px;width:1px;height:35px;background:#e0e0e0"></div>
<div style="left:1315px;top:711px;width:1px;height:35px;background:#e0e0e0"></div>
<div style="left:1447px;top:711px;width:1px;height:35px;background:#e0e0e0"></div>
<div style="left:1580px;top:711px;width:1px;height:35px;background:#e0e0e0"></div>
<div style="left:1712px;top:711px;width:1px;height:35px;background:#e0e0e0"></div>
<div style="left:1884.5px;top:711px;width:1px;height:35px;background:#e0e0e0"></div>
<div style="left:197px;top:721px;width:14px;height:14px;border:1px solid #8c8c8c;border-radius:2px;background:#e9e9e9"></div>
<svg style="left:231px;top:722px" width="11" height="9" viewBox="0 0 11 9"><g stroke="#404040" stroke-width="1"><line x1="0" y1="0.5" x2="11" y2="0.5" stroke="#9a9a9a"/><line x1="0" y1="3.3" x2="11" y2="3.3"/><line x1="0" y1="6.1" x2="11" y2="6.1"/><line x1="0" y1="8.5" x2="11" y2="8.5"/></g></svg>
<span class="t gc" style="left:263px;top:720.6px;color:#404040;font-weight:bold;transform:scaleX(0.91)">Sub Task</span>
<span class="t gc" style="left:395.5px;top:720.6px;color:#404040;font-weight:bold;transform:scaleX(0.91)">Task Code</span>
<span class="t gc" style="left:527.5px;top:720.6px;color:#404040;font-weight:bold;transform:scaleX(0.91)">Task De</span>
<span class="t gc" style="left:660.5px;top:720.6px;color:#404040;font-weight:bold;transform:scaleX(0.91)">Comply</span>
<span class="t gc" style="left:793px;top:720.6px;color:#404040;font-weight:bold;transform:scaleX(0.91)">Checking</span>
<span class="tc gc" style="left:923.5px;width:120px;text-align:center;top:720.6px;color:#404040;font-weight:bold;transform:scaleX(0.91)">Target</span>
<span class="tc gc" style="left:1056px;width:120px;text-align:center;top:720.6px;color:#404040;font-weight:bold;transform:scaleX(0.91)">Actual</span>
<span class="t gc" style="left:1190px;top:720.6px;color:#404040;font-weight:bold;transform:scaleX(0.91)">Feedback</span>
<span class="t gc" style="left:1323px;top:720.6px;color:#404040;font-weight:bold;transform:scaleX(0.91)">Recommend</span>
<span class="tc gc" style="left:1453.5px;width:120px;text-align:center;top:714.3px;color:#404040;font-weight:bold;transform:scaleX(0.94)">Completion</span>
<span class="tc gc" style="left:1453.5px;width:120px;text-align:center;top:727.3px;color:#404040;font-weight:bold;transform:scaleX(0.94)">Date</span>
<span class="t gc" style="left:1588px;top:720.6px;color:#404040;font-weight:bold;transform:scaleX(0.91)">Comments</span>
<span class="tc gc" style="left:1738px;width:120px;text-align:center;top:720.6px;color:#404040;font-weight:bold;transform:scaleX(0.91)">Create JobCard</span>
</body></html>
